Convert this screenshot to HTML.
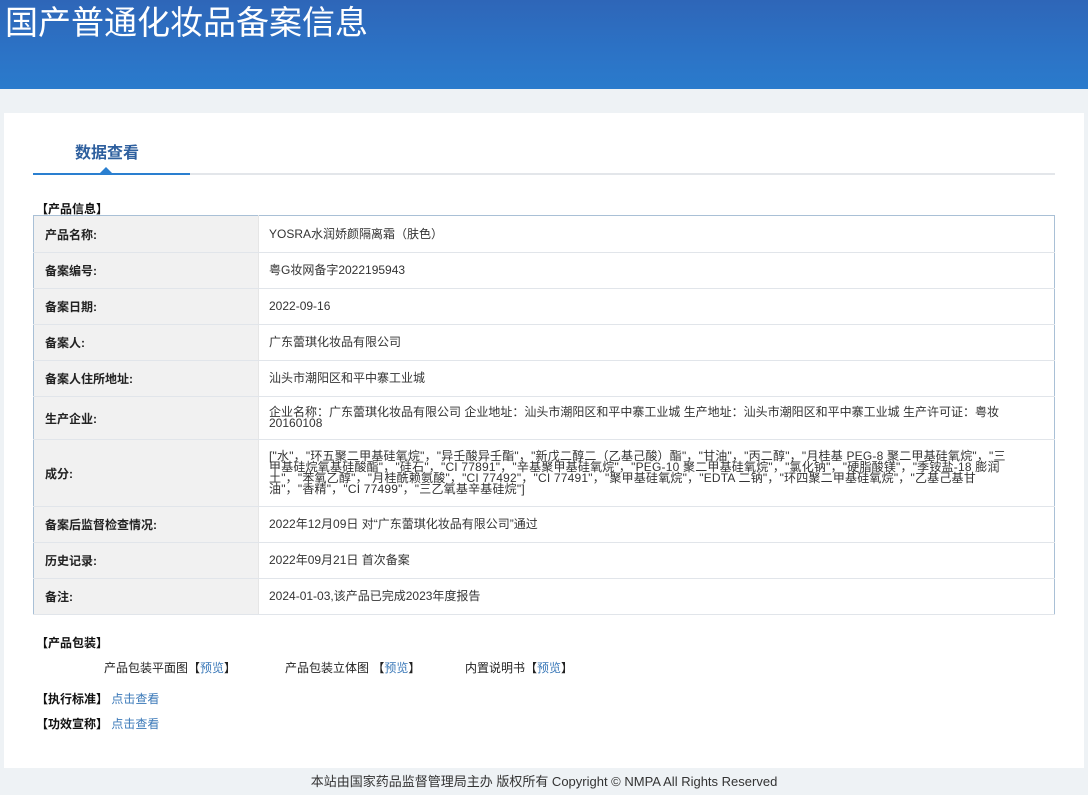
<!DOCTYPE html>
<html><head><meta charset="utf-8"><style>
*{margin:0;padding:0;box-sizing:border-box}
body{width:1088px;height:795px;background:#eef2f5;font-family:"Liberation Sans","Noto Sans CJK SC",sans-serif;color:#333;position:relative;overflow:hidden}
.hd{position:absolute;left:0;top:0;width:1088px;height:89px;background:linear-gradient(180deg,#2e66b8 0%,#2c73c6 60%,#2a7bcc 100%)}
.hd h1{position:absolute;left:5px;top:1px;font-size:33px;font-weight:normal;color:#fff;line-height:44px}
.panel{position:absolute;left:4px;top:113px;width:1080px;height:655px;background:#fff}
.tab{position:absolute;left:71px;top:26px;font-size:16px;font-weight:bold;color:#2e5f9e}
.tl{position:absolute;left:29px;top:60px;width:1022px;height:2px;background:#e3e6ea}
.tlb{position:absolute;left:29px;top:60px;width:157px;height:2px;background:#2a7fd0}
.tri{position:absolute;left:96px;top:54px;width:0;height:0;border-left:6px solid transparent;border-right:6px solid transparent;border-bottom:6px solid #2a7fd0}
.sec{position:absolute;font-size:12px;font-weight:bold;color:#111}
table{position:absolute;left:29px;top:102px;width:1022px;border-collapse:collapse;border:1px solid #a9c0d6;font-size:12px}
td{border-bottom:1px solid #e1e5ea;vertical-align:middle}
td.l{width:225px;background:#f1f1f1;font-weight:bold;color:#222;padding-left:11px;border-right:1px solid #e6e6e6}
td.v{padding:0 10px;color:#333;line-height:11px}
td.w{padding-right:44px;letter-spacing:0.2px}
td.p{padding-right:44px}
a{color:#3a78b8;text-decoration:none}
.ln{position:absolute;font-size:12px;color:#222}
.ft{position:absolute;left:0;top:771px;width:1088px;text-align:center;font-size:13px;color:#333}
</style></head><body>
<div class="hd"><h1>国产普通化妆品备案信息</h1></div>
<div class="panel">
<div class="tab">数据查看</div>
<div class="tl"></div><div class="tlb"></div><div class="tri"></div>
<div class="sec" style="left:32px;top:87px">【产品信息】</div>
<table>
<tr style="height:37px"><td class="l">产品名称:</td><td class="v">YOSRA水润娇颜隔离霜（肤色）</td></tr>
<tr style="height:36px"><td class="l">备案编号:</td><td class="v">粤G妆网备字2022195943</td></tr>
<tr style="height:36px"><td class="l">备案日期:</td><td class="v">2022-09-16</td></tr>
<tr style="height:36px"><td class="l">备案人:</td><td class="v">广东蕾琪化妆品有限公司</td></tr>
<tr style="height:36px"><td class="l">备案人住所地址:</td><td class="v">汕头市潮阳区和平中寨工业城</td></tr>
<tr style="height:43px"><td class="l">生产企业:</td><td class="v p">企业名称：广东蕾琪化妆品有限公司 企业地址：汕头市潮阳区和平中寨工业城 生产地址：汕头市潮阳区和平中寨工业城 生产许可证：粤妆 20160108</td></tr>
<tr style="height:67px"><td class="l">成分:</td><td class="v w">["水"，"环五聚二甲基硅氧烷"，"异壬酸异壬酯"，"新戊二醇二（乙基己酸）酯"，"甘油"，"丙二醇"，"月桂基 PEG-8 聚二甲基硅氧烷"，"三甲基硅烷氧基硅酸酯"，"硅石"，"CI 77891"，"辛基聚甲基硅氧烷"，"PEG-10 聚二甲基硅氧烷"，"氯化钠"，"硬脂酸镁"，"季铵盐-18 膨润土"，"苯氧乙醇"，"月桂酰赖氨酸"，"CI 77492"，"CI 77491"，"聚甲基硅氧烷"，"EDTA 二钠"，"环四聚二甲基硅氧烷"，"乙基己基甘油"，"香精"，"CI 77499"，"三乙氧基辛基硅烷"]</td></tr>
<tr style="height:36px"><td class="l">备案后监督检查情况:</td><td class="v">2022年12月09日 对“广东蕾琪化妆品有限公司”通过</td></tr>
<tr style="height:36px"><td class="l">历史记录:</td><td class="v">2022年09月21日 首次备案</td></tr>
<tr style="height:36px"><td class="l">备注:</td><td class="v">2024-01-03,该产品已完成2023年度报告</td></tr>
</table>
<div class="sec" style="left:32px;top:521px">【产品包装】</div>
<div class="ln" style="left:100px;top:546px">产品包装平面图【<a>预览</a>】</div>
<div class="ln" style="left:281px;top:546px">产品包装立体图 【<a>预览</a>】</div>
<div class="ln" style="left:461px;top:546px">内置说明书【<a>预览</a>】</div>
<div class="sec" style="left:32px;top:577px">【执行标准】 <a style="font-weight:normal">点击查看</a></div>
<div class="sec" style="left:32px;top:602px">【功效宣称】 <a style="font-weight:normal">点击查看</a></div>
</div>
<div class="ft">本站由国家药品监督管理局主办 版权所有 Copyright © NMPA All Rights Reserved</div>
</body></html>
